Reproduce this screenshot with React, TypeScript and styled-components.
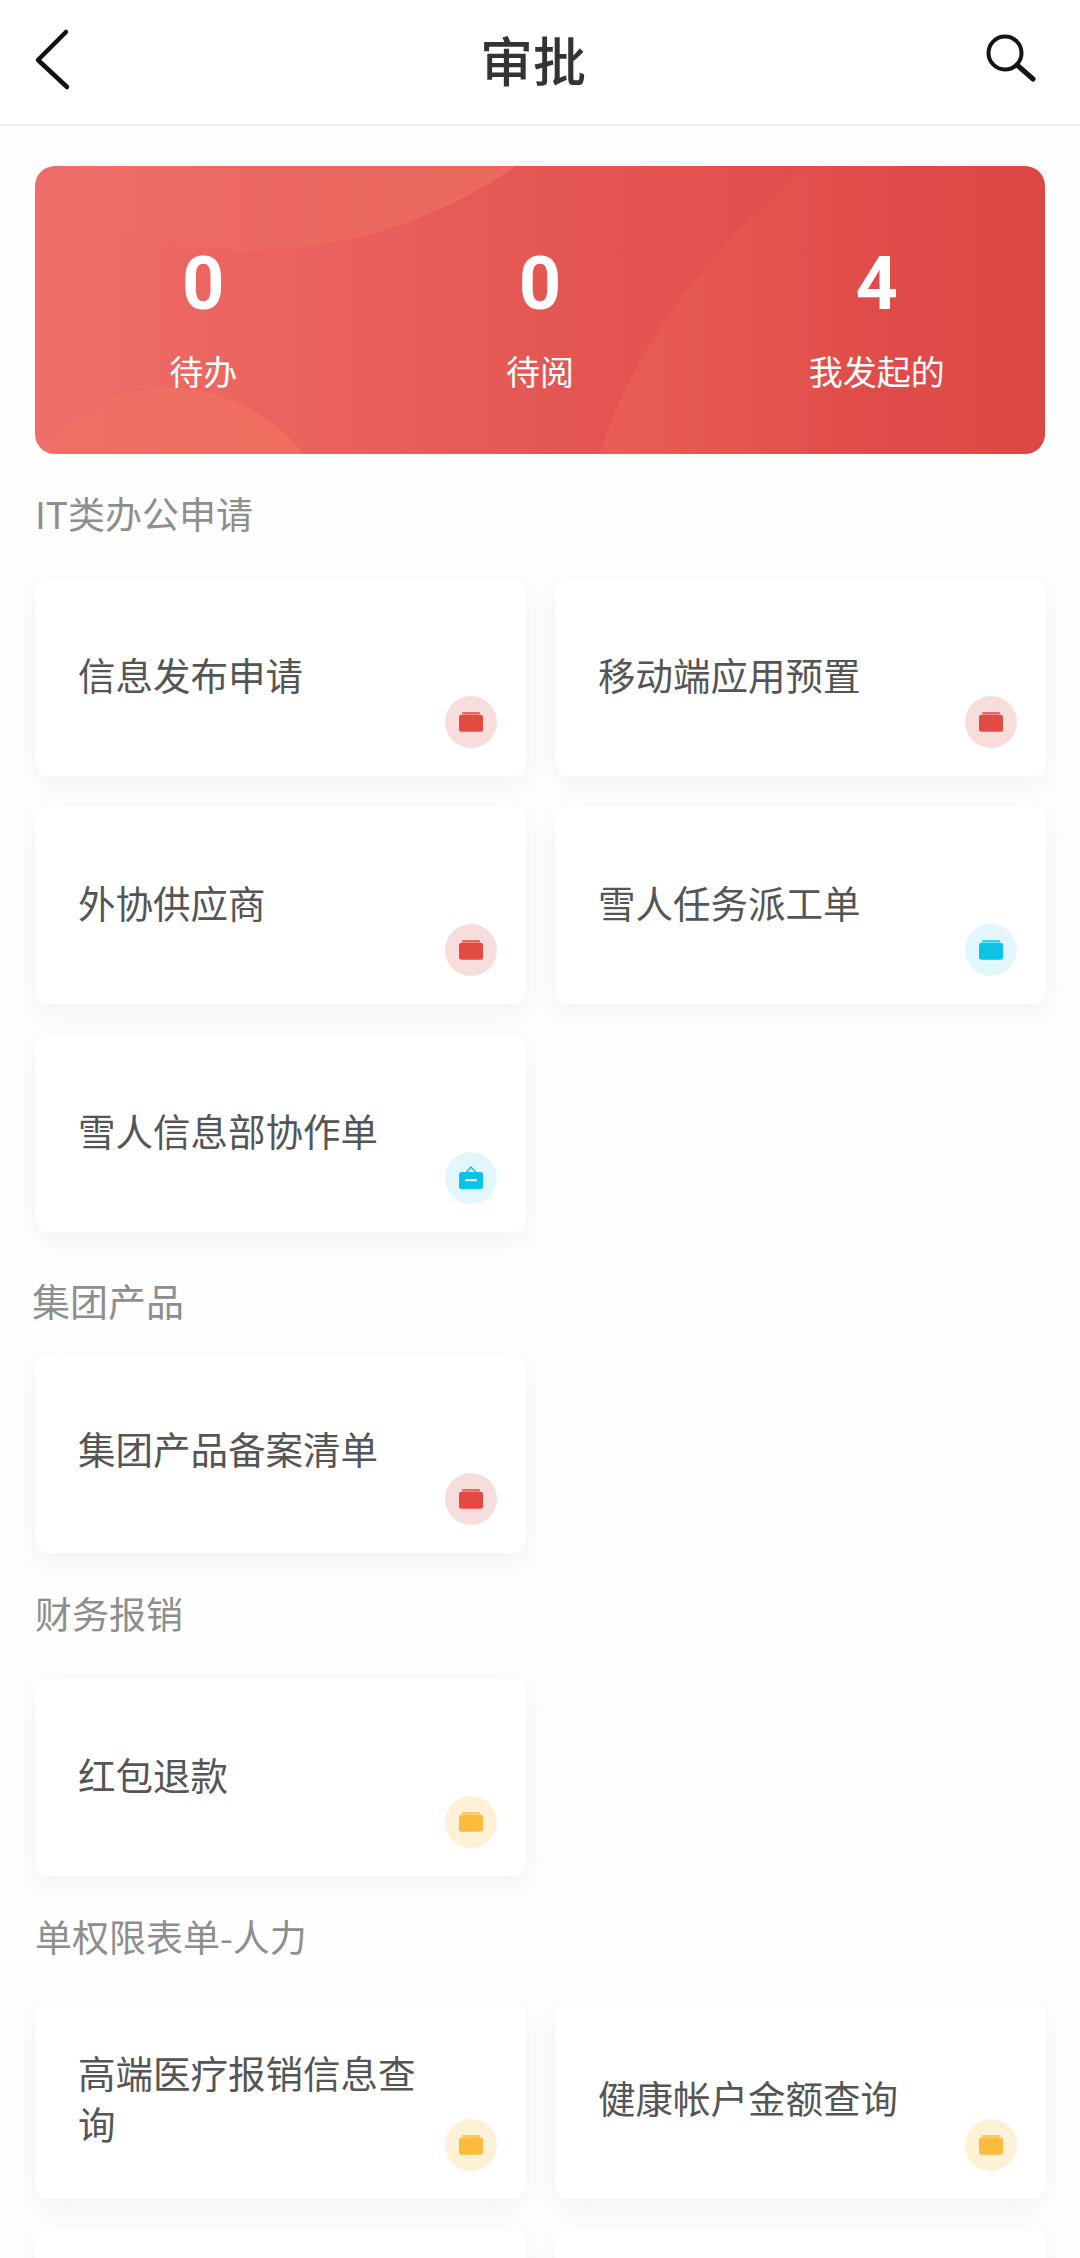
import React from "react";
import styled, { createGlobalStyle } from "styled-components";

const Global = createGlobalStyle`
  html, body { margin: 0; padding: 0; background: #fefefe; }
  body { font-family: "Noto Sans CJK SC", "Noto Sans", sans-serif; }
`;

const Screen = styled.div`
  width: 1080px;
  height: 2258px;
  overflow: hidden;
  background: #fefefe;
`;

const Header = styled.header`
  height: 124px;
  background: #fff;
  border-bottom: 2px solid #eeeeee;
  display: grid;
  grid-template-columns: 480px 106px 1fr;
  align-items: center;
`;

const BackButton = styled.svg`
  width: 80px;
  height: 124px;
  display: block;
`;

const Title = styled.h1`
  margin: 0;
  font-size: 53px;
  line-height: 1;
  font-weight: 500;
  color: #333;
  white-space: nowrap;
  position: relative;
  top: -3px;
`;

const SearchButton = styled.svg`
  justify-self: end;
  margin-right: 25px;
  width: 75px;
  height: 124px;
  display: block;
`;

const Content = styled.main`
  padding: 40px 34px 0 35px;
`;

const Banner = styled.section`
  position: relative;
  width: 1010px;
  height: 288px;
  border-radius: 20px;
  overflow: hidden;
  background: linear-gradient(90deg, #ef6e69 0%, #e55753 50%, #dd4744 100%);
  display: grid;
  grid-template-columns: repeat(3, 1fr);
  color: #fff;
`;

const BannerArt = styled.svg`
  position: absolute;
  inset: 0;
  width: 100%;
  height: 100%;
`;

const Stat = styled.div`
  position: relative;
  display: flex;
  flex-direction: column;
  align-items: center;
`;

const StatValue = styled.div`
  margin-top: 76px;
  height: 84px;
  font-family: Roboto, "Liberation Sans", sans-serif;
  font-size: 74px;
  line-height: 84px;
  font-weight: 700;
`;

const StatLabel = styled.div`
  margin-top: 22px;
  font-size: 34px;
  line-height: 46px;
  font-weight: 400;
`;

const SectionTitle = styled.h2<{ $top: number; $bottom: number; $shift?: number; $size?: number }>`
  margin: ${(p) => p.$top}px 0 ${(p) => p.$bottom}px ${(p) => p.$shift ?? 0}px;
  font-size: ${(p) => p.$size ?? 37}px;
  line-height: 44px;
  font-weight: 400;
  color: #8e8e8e;
`;

const CardGrid = styled.div`
  display: grid;
  grid-template-columns: 491px 491px;
  column-gap: 29px;
  row-gap: 30px;
`;

const Card = styled.div<{ $lift?: number }>`
  position: relative;
  height: 198px;
  box-sizing: border-box;
  padding: 0 100px ${(p) => p.$lift ?? 7}px 43px;
  display: flex;
  align-items: center;
  background: #fff;
  border-radius: 14px;
  box-shadow: 0 8px 26px rgba(120, 90, 90, 0.08);
  font-size: 37.5px;
  line-height: 51px;
  color: #555;
`;

const Badge = styled.div<{ $bg: string }>`
  position: absolute;
  right: 29px;
  bottom: 28px;
  width: 52px;
  height: 52px;
  border-radius: 50%;
  background: ${(p) => p.$bg};
  display: flex;
  align-items: center;
  justify-content: center;
`;

const BadgeIcon = styled.svg`
  width: 26px;
  height: 26px;
  display: block;
`;

type Tone = "red" | "cyan" | "yellow";
const tones: Record<Tone, { bg: string; fg: string }> = {
  red: { bg: "#f8dddd", fg: "#e24a42" },
  cyan: { bg: "#e2f7fb", fg: "#0cc4e6" },
  yellow: { bg: "#fef1d6", fg: "#fdba3d" },
};

function Folder({ fg }: { fg: string }) {
  return (
    <BadgeIcon viewBox="0 0 26 26">
      <rect x="4" y="3" width="18" height="2.4" rx="1" fill={fg} opacity="0.8" />
      <rect x="1" y="5.8" width="24" height="17" rx="2.5" fill={fg} />
    </BadgeIcon>
  );
}

function Bag({ fg }: { fg: string }) {
  return (
    <BadgeIcon viewBox="0 0 26 26">
      <path d="M8.5 7 L13 2 L17.5 7" fill="none" stroke={fg} strokeWidth="1.4" />
      <rect x="1" y="7" width="24" height="17" rx="2.5" fill={fg} />
      <rect x="7" y="14" width="12" height="2.2" fill="#e8fafd" />
    </BadgeIcon>
  );
}

type Item = { label?: string; tone: Tone; icon?: "bag"; lift?: number };

function ItemCard({ item }: { item: Item }) {
  const t = tones[item.tone];
  return (
    <Card $lift={item.lift}>
      {item.label}
      <Badge $bg={t.bg}>{item.icon === "bag" ? <Bag fg={t.fg} /> : <Folder fg={t.fg} />}</Badge>
    </Card>
  );
}

const sections: { title: string; top: number; bottom: number; shift?: number; size?: number; items: Item[] }[] = [
  {
    title: "IT类办公申请",
    top: 37,
    bottom: 43,
    items: [
      { label: "信息发布申请", tone: "red" },
      { label: "移动端应用预置", tone: "red" },
      { label: "外协供应商", tone: "red" },
      { label: "雪人任务派工单", tone: "cyan" },
      { label: "雪人信息部协作单", tone: "cyan", icon: "bag" },
    ],
  },
  {
    title: "集团产品",
    top: 46,
    bottom: 33,
    shift: -3,
    size: 38,
    items: [{ label: "集团产品备案清单", tone: "red", lift: 14 }],
  },
  {
    title: "财务报销",
    top: 38,
    bottom: 43,
    items: [{ label: "红包退款", tone: "yellow" }],
  },
  {
    title: "单权限表单-人力",
    top: 38,
    bottom: 43,
    items: [
      { label: "高端医疗报销信息查询", tone: "yellow" },
      { label: "健康帐户金额查询", tone: "yellow" },
      { tone: "yellow" },
      { tone: "yellow" },
    ],
  },
];

const stats = [
  { value: "0", label: "待办" },
  { value: "0", label: "待阅" },
  { value: "4", label: "我发起的" },
];

export default function App() {
  return (
    <Screen>
      <Global />
      <Header>
        <BackButton viewBox="0 0 80 124">
          <path d="M66 32 L38 60 L67 87" fill="none" stroke="#111" strokeWidth="4.5" strokeLinecap="round" strokeLinejoin="round" />
        </BackButton>
        <Title>审批</Title>
        <SearchButton viewBox="0 0 75 124">
          <circle cx="25" cy="53" r="16.5" fill="none" stroke="#151515" strokeWidth="4" />
          <path d="M37 65 L53 79" fill="none" stroke="#151515" strokeWidth="5" strokeLinecap="round" />
        </SearchButton>
      </Header>
      <Content>
        <Banner>
          <BannerArt viewBox="0 0 1010 288">
            <defs>
              <linearGradient id="arcTop" x1="0" y1="0" x2="1" y2="0">
                <stop offset="0.3" stopColor="#f27c68" stopOpacity="0" />
                <stop offset="0.85" stopColor="#f27c68" stopOpacity="0.55" />
              </linearGradient>
              <linearGradient id="arcRight" x1="0" y1="0" x2="1" y2="0">
                <stop offset="0" stopColor="#f06a58" stopOpacity="0.4" />
                <stop offset="0.6" stopColor="#f06a58" stopOpacity="0" />
              </linearGradient>
              <linearGradient id="arcLeft" x1="0" y1="0" x2="1" y2="0">
                <stop offset="0" stopColor="#f57a62" stopOpacity="0.2" />
                <stop offset="1" stopColor="#f57a62" stopOpacity="0.55" />
              </linearGradient>
            </defs>
            <circle cx="215" cy="-379" r="463" fill="url(#arcTop)" />
            <circle cx="135" cy="389" r="167" fill="url(#arcLeft)" />
            <path d="M771 0 C 690 70 600 170 565 288 L1010 288 L1010 0 Z" fill="url(#arcRight)" />
          </BannerArt>
          {stats.map((s) => (
            <Stat key={s.label}>
              <StatValue>{s.value}</StatValue>
              <StatLabel>{s.label}</StatLabel>
            </Stat>
          ))}
        </Banner>
        {sections.map((s) => (
          <section key={s.title}>
            <SectionTitle $top={s.top} $bottom={s.bottom} $shift={s.shift} $size={s.size}>
              {s.title}
            </SectionTitle>
            <CardGrid>
              {s.items.map((item, i) => (
                <ItemCard key={i} item={item} />
              ))}
            </CardGrid>
          </section>
        ))}
      </Content>
    </Screen>
  );
}
